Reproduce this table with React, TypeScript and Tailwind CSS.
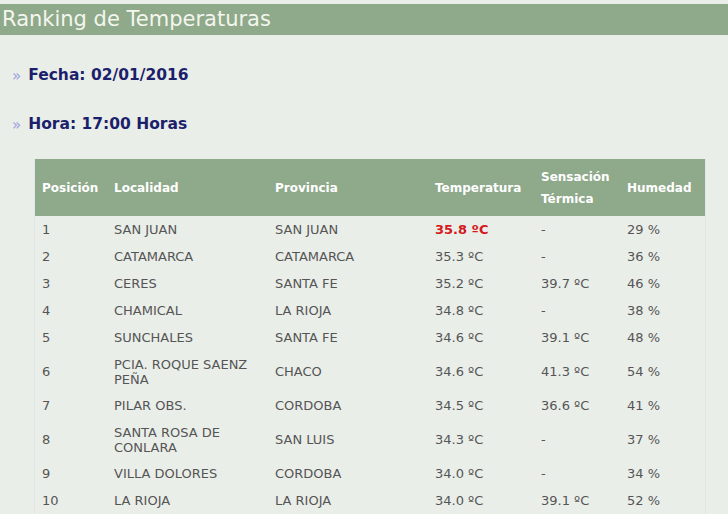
import React from 'react'

interface Row {
  pos: number
  localidad: string
  provincia: string
  temp: string
  sensacion: string
  humedad: string
  tall?: boolean
}

const ROWS: Row[] = [
  { pos: 1, localidad: 'SAN JUAN', provincia: 'SAN JUAN', temp: '35.8 ºC', sensacion: '-', humedad: '29 %' },
  { pos: 2, localidad: 'CATAMARCA', provincia: 'CATAMARCA', temp: '35.3 ºC', sensacion: '-', humedad: '36 %' },
  { pos: 3, localidad: 'CERES', provincia: 'SANTA FE', temp: '35.2 ºC', sensacion: '39.7 ºC', humedad: '46 %' },
  { pos: 4, localidad: 'CHAMICAL', provincia: 'LA RIOJA', temp: '34.8 ºC', sensacion: '-', humedad: '38 %' },
  { pos: 5, localidad: 'SUNCHALES', provincia: 'SANTA FE', temp: '34.6 ºC', sensacion: '39.1 ºC', humedad: '48 %' },
  { pos: 6, localidad: 'PCIA. ROQUE SAENZ PEÑA', provincia: 'CHACO', temp: '34.6 ºC', sensacion: '41.3 ºC', humedad: '54 %', tall: true },
  { pos: 7, localidad: 'PILAR OBS.', provincia: 'CORDOBA', temp: '34.5 ºC', sensacion: '36.6 ºC', humedad: '41 %' },
  { pos: 8, localidad: 'SANTA ROSA DE CONLARA', provincia: 'SAN LUIS', temp: '34.3 ºC', sensacion: '-', humedad: '37 %', tall: true },
  { pos: 9, localidad: 'VILLA DOLORES', provincia: 'CORDOBA', temp: '34.0 ºC', sensacion: '-', humedad: '34 %' },
  { pos: 10, localidad: 'LA RIOJA', provincia: 'LA RIOJA', temp: '34.0 ºC', sensacion: '39.1 ºC', humedad: '52 %' },
]

export default function App() {
  return (
    <div className="min-h-[514px] bg-[#eaeee9] pt-[4px] font-['DejaVu_Sans',Verdana,sans-serif] overflow-hidden">
      <div className="h-[31px] bg-[#8fa98b] pl-[2px] text-[21px] leading-[31px] text-[#f4f6ee]">
        Ranking de Temperaturas
      </div>

      <div className="mt-[31px] pl-[12px] flex items-center gap-[7px] h-[20px]">
        <span className="text-[15px] text-[#9a9ee0]">»</span>
        <span className="text-[15.5px] font-bold text-[#1c1f6b]">Fecha: 02/01/2016</span>
      </div>
      <div className="mt-[29px] pl-[12px] flex items-center gap-[7px] h-[20px]">
        <span className="text-[15px] text-[#9a9ee0]">»</span>
        <span className="text-[15.5px] font-bold text-[#1c1f6b]">Hora: 17:00 Horas</span>
      </div>

      <div className="mt-[24px] ml-[34px] w-[672px] border-x border-[#dfe6e6]">
        <table className="w-[670px] table-fixed border-collapse">
          <colgroup>
            <col className="w-[72px]" />
            <col className="w-[161px]" />
            <col className="w-[160px]" />
            <col className="w-[106px]" />
            <col className="w-[86px]" />
            <col className="w-[85px]" />
          </colgroup>
          <thead>
            <tr className="h-[57px] bg-[#8fa98b] text-left text-[12px] text-white font-bold leading-[22px]">
              <th className="px-[7px]">Posición</th>
              <th className="px-[7px]">Localidad</th>
              <th className="px-[7px]">Provincia</th>
              <th className="px-[7px]">Temperatura</th>
              <th className="px-[7px]">Sensación Térmica</th>
              <th className="px-[7px]">Humedad</th>
            </tr>
          </thead>
          <tbody className="text-[13px] text-[#555] leading-[15px]">
            {ROWS.map(r => (
              <tr key={r.pos} className={r.tall ? 'h-[41px]' : 'h-[27px]'}>
                <td className="px-[7px] py-0">{r.pos}</td>
                <td className="px-[7px] py-0 pr-[12px]">{r.localidad}</td>
                <td className="px-[7px] py-0">{r.provincia}</td>
                <td className={`px-[7px] py-0 ${r.pos === 1 ? 'font-bold text-[#d3191c]' : ''}`}>{r.temp}</td>
                <td className="px-[7px] py-0">{r.sensacion}</td>
                <td className="px-[7px] py-0">{r.humedad}</td>
              </tr>
            ))}
          </tbody>
        </table>
      </div>
    </div>
  )
}
